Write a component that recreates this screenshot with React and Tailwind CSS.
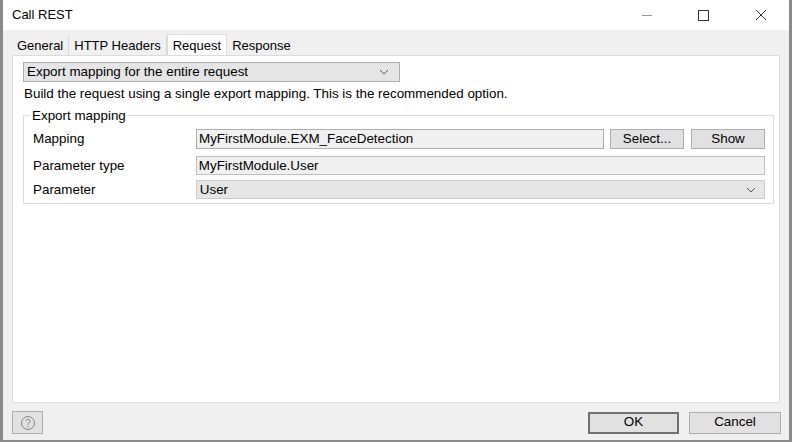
import React from "react";

const Chevron = () => (
  <svg width="10" height="6" viewBox="0 0 10 6" fill="none">
    <path d="M1 1l4 4 4-4" stroke="#555" strokeWidth="1" />
  </svg>
);

const App = () => {
  return (
    <div
      className="w-[792px] h-[442px] bg-[#f0f0f0] border-l-[3px] border-r-[3px] border-b-[2px] border-[#8a8a8a] flex flex-col text-[13.4px] text-black overflow-hidden"
      style={{ fontFamily: '"Liberation Sans", Arial, sans-serif' }}
    >
      {/* title bar */}
      <div className="h-[30px] bg-white flex items-center justify-between pl-[9px]">
        <span className="text-[13px]">Call REST</span>
        <div className="flex items-center h-full">
          <div className="w-[57px] h-full flex items-center justify-center">
            <div className="w-[10px] h-px bg-[#999]" />
          </div>
          <div className="w-[57px] h-full flex items-center justify-center">
            <div className="w-[11px] h-[11px] border border-[#333]" />
          </div>
          <div className="w-[57px] h-full flex items-center justify-center">
            <svg width="12" height="12" viewBox="0 0 12 12">
              <path d="M1 1l10 10M11 1L1 11" stroke="#333" strokeWidth="1" />
            </svg>
          </div>
        </div>
      </div>

      {/* tabs */}
      <div className="flex items-end pl-[9px] pt-[6px] h-[25px] text-[13px]">
        <div className="px-[5px] h-[19px] flex items-center border-r border-[#d9d9d9]">General</div>
        <div className="px-[5px] h-[19px] flex items-center border-r border-[#d9d9d9]">HTTP Headers</div>
        <div className="px-[5px] h-[21px] flex items-start pt-[1px] bg-white border border-b-0 border-[#dcdcdc]">Request</div>
        <div className="px-[5px] h-[19px] flex items-center">Response</div>
      </div>

      {/* content panel */}
      <div className="mx-[9px] h-[348px] bg-white border border-[#dcdcdc] px-[10px] pt-[6px]">
        <div className="w-[377px] h-[20px] bg-[#e5e5e5] border border-[#adadad] flex items-center justify-between pl-[3px] pr-[10px]">
          <span>Export mapping for the entire request</span>
          <Chevron />
        </div>
        <div className="mt-[2px] pl-[1px]">
          Build the request using a single export mapping. This is the recommended option.
        </div>

        {/* group box */}
        <div className="relative mt-[11px] w-[751px] h-[89px] border border-[#dcdcdc] pt-[13px] pl-[9px] pr-[8px]">
          <span className="absolute -top-[10px] left-[6px] bg-white px-[2px]">Export mapping</span>
          <div className="flex items-center h-[20px]">
            <span className="w-[163px]">Mapping</span>
            <div className="w-[408px] h-[20px] bg-[#f0f0f0] border border-[#adadad] flex items-center pl-[2px]">
              MyFirstModule.EXM_FaceDetection
            </div>
            <div className="ml-[6px] w-[74px] h-[20px] bg-[#e1e1e1] border border-[#adadad] flex items-center justify-center">
              Select...
            </div>
            <div className="ml-[7px] w-[74px] h-[20px] bg-[#e1e1e1] border border-[#adadad] flex items-center justify-center">
              Show
            </div>
          </div>
          <div className="flex items-center h-[19px] mt-[7px]">
            <span className="w-[163px]">Parameter type</span>
            <div className="w-[570px] h-[19px] bg-[#f0f0f0] border border-[#bfbfbf] flex items-center pl-[2px]">
              MyFirstModule.User
            </div>
          </div>
          <div className="flex items-center h-[19px] mt-[5px]">
            <span className="w-[163px]">Parameter</span>
            <div className="w-[570px] h-[19px] bg-[#e5e5e5] border border-[#cccccc] flex items-center justify-between pl-[3px] pr-[8px]">
              <span>User</span>
              <Chevron />
            </div>
          </div>
        </div>
      </div>

      {/* footer */}
      <div className="flex items-center justify-between pl-[9px] pr-[8px] mt-[8px]">
        <div className="w-[31px] h-[23px] bg-[#e1e1e1] border border-[#adadad] flex items-center justify-center">
          <svg width="16" height="16" viewBox="0 0 16 16" fill="none">
            <circle cx="8" cy="8" r="6.5" stroke="#888" strokeWidth="1" />
            <path d="M6 6.3a2 2 0 1 1 2.6 1.9c-.4.2-.6.5-.6 1V10" stroke="#888" strokeWidth="1" />
            <circle cx="8" cy="11.8" r="0.7" fill="#888" />
          </svg>
        </div>
        <div className="flex gap-[10px]">
          <div className="w-[91px] h-[22px] bg-[#e1e1e1] border-2 border-[#707070] flex items-center justify-center">OK</div>
          <div className="w-[92px] h-[22px] bg-[#e1e1e1] border border-[#adadad] flex items-center justify-center">Cancel</div>
        </div>
      </div>
    </div>
  );
};

export default App;
